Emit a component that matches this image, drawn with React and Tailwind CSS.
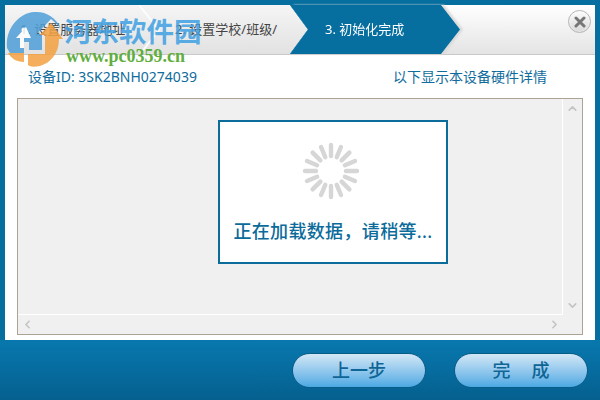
import { ChevronLeft, ChevronRight, ChevronUp, ChevronDown } from "lucide-react";

const cjk = "font-['Microsoft_YaHei','Noto_Sans','Noto_Sans_CJK_SC',sans-serif]";

function Spinner() {
  const spokes = Array.from({ length: 16 }, (_, i) => i * 22.5);
  return (
    <svg width="58" height="58" viewBox="0 0 58 58" className="block">
      {spokes.map((a) => (
        <line
          key={a}
          x1="29"
          y1="3"
          x2="29"
          y2="14"
          stroke="#d6d6d6"
          strokeWidth="4.4"
          strokeLinecap="round"
          transform={`rotate(${a} 29 29)`}
        />
      ))}
    </svg>
  );
}

function Logo() {
  return (
    <svg width="60" height="58" viewBox="0 0 60 58" className="block opacity-85">
      {/* blue disc */}
      <path d="M3 37 C1 18 15 2 30 1 C42 0 51 6 57 17 L47 8 L33 23 L38 23 L38 39 L25 39 L25 31 L20 31 L20 42 L6 42 Z" fill="#4e9fd8" />
      <path d="M22 16 L12 27 L16 27 L16 37 L20 37 L20 27 L27 27 Z" fill="#fff" />
      <circle cx="20" cy="19" r="2.5" fill="#fff" />
      {/* orange arrow and base */}
      <path d="M47 12 L59 28 L55 28 C55 43 46 52 36 55 C30 56 26 56 24 54 L24 43 L41 43 L41 24 L36 24 Z" fill="#f3a141" />
      <path d="M4 42 L20 42 L20 51 C12 51 7 47 4 42 Z" fill="#f3a141" />
    </svg>
  );
}

function CloseButton() {
  return (
    <div className="flex h-[23px] w-[23px] items-center justify-center rounded-full border border-[#b5b5b5] bg-gradient-to-b from-[#fdfdfd] to-[#d8d8d8] shadow-[inset_0_0_2px_#fff]">
      <svg width="12" height="12" viewBox="0 0 12 12">
        <path d="M2 2 L10 10 M10 2 L2 10" stroke="#767676" strokeWidth="3" strokeLinecap="round" />
      </svg>
    </div>
  );
}

function PillButton({ children }) {
  return (
    <button className={`h-[35px] w-[134px] rounded-[18px] border border-[#0a5c88] bg-gradient-to-b from-[#d3e7f6] to-[#4aa9e3] text-[18px] font-medium leading-none text-[#0f6595] ${cjk}`}>
      {children}
    </button>
  );
}

export default function App() {
  return (
    <div className={`relative flex h-[400px] w-[600px] flex-col overflow-hidden bg-[#066f9f] ${cjk}`}>
      {/* Main white panel */}
      <div className="mx-[5px] mt-[5px] flex h-[335px] flex-col bg-white">
        {/* Steps */}
        <div className="relative flex h-[49px] shrink-0 items-center bg-gradient-to-b from-white to-[#e4e4e4] text-[13px] text-[#444] shadow-[0_1px_0_#c9c9c9]">
          <div className="flex h-full w-[303px] items-center bg-[#066f9f] [clip-path:polygon(0_0,285px_0,303px_50%,285px_100%,0_100%)]">
            <div className="flex h-full w-full items-center bg-gradient-to-b from-[#f5f5f5] to-[#e2e2e2] pl-[15px] [clip-path:polygon(0_0,285px_0,303px_50%,285px_100%,0_100%)]">
              <span className="w-[155px]">1. 设置服务器地址</span>
              <span>2. 设置学校/班级/</span>
            </div>
          </div>
          <div className="-ml-[18px] h-full drop-shadow-[3px_0_1px_#d8d8d8]">
            <div className="flex h-full w-[170px] items-center bg-[#066f9f] pl-[35px] text-white [clip-path:polygon(0_0,151px_0,170px_50%,151px_100%,0_100%,18px_50%)]">
              3. 初始化完成
            </div>
          </div>
          <svg width="24" height="49" viewBox="0 0 24 49" className="absolute left-[133px] top-0">
            <path d="M1 0 L21 25 L2 49" fill="none" stroke="#ffffff" strokeWidth="2" opacity="0.8" />
          </svg>
          <div className="absolute left-[563px] top-[5px]">
            <CloseButton />
          </div>
        </div>

        {/* Device info row */}
        <div className="flex h-[44px] shrink-0 items-center justify-between pl-[23px] pr-[48px] text-[14px] text-[#0f6c9c]">
          <span>设备ID: 3SK2BNH0274039</span>
          <span>以下显示本设备硬件详情</span>
        </div>

        {/* Content box */}
        <div className="mx-[12px] flex h-[237px] flex-col border border-[#aca395] bg-[#f0f0f0]">
          <div className="flex min-h-0 flex-1">
            <div className="flex-1 border-b border-r border-white pl-[200px] pt-[21px]">
              <div className="flex h-[144px] w-[230px] flex-col items-center border-2 border-[#0b6b9a] bg-white">
                <div className="ml-[-4px] mt-[20px]">
                  <Spinner />
                </div>
                <div className="mt-[18px] text-[18px] font-medium leading-[26px] tracking-[0.35px] text-[#0b6b9a]">正在加载数据，请稍等...</div>
              </div>
            </div>
            <div className="flex w-[19px] flex-col items-center justify-between py-[3px] text-[#c4c4c4]">
              <ChevronUp size={13} strokeWidth={3} />
              <ChevronDown size={13} strokeWidth={3} />
            </div>
          </div>
          <div className="flex h-[19px] shrink-0 items-center justify-between px-[3px] pr-[21px] text-[#c4c4c4]">
            <ChevronLeft size={13} strokeWidth={3} />
            <ChevronRight size={13} strokeWidth={3} />
          </div>
        </div>
      </div>

      {/* Bottom bar */}
      <div className="flex flex-1 items-center justify-end gap-[28px] bg-gradient-to-b from-[#0878ae] to-[#05608f] pr-[12px]">
        <PillButton>上一步</PillButton>
        <PillButton>
          完<span className="ml-[21px]">成</span>
        </PillButton>
      </div>

      {/* Site watermark over the window */}
      <div className="absolute left-[4px] top-[11px]">
        <Logo />
      </div>
      <div className="absolute left-[64px] top-[11px] text-[27.5px] font-bold leading-[38px] text-[#3e9fe2]/85 [font-family:'Noto_Sans_CJK_SC',sans-serif]">河东软件园</div>
      <div className="absolute left-[66px] top-[45px] text-[18px] font-bold leading-[22px] text-[#5fae3e] [font-family:'Liberation_Serif',serif]">www.pc0359.cn</div>
    </div>
  );
}
